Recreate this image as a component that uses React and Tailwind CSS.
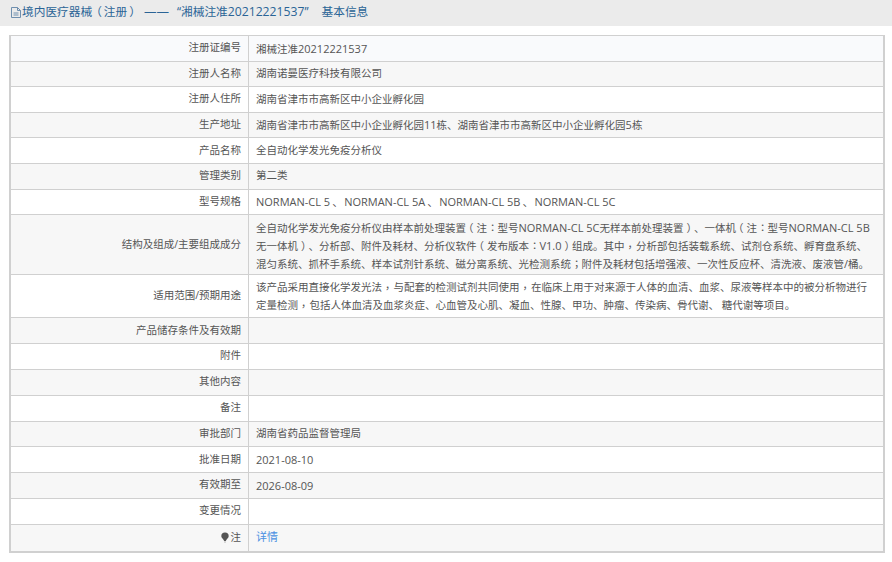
const rows = [
  ["注册证编号", "湘械注准20212221537", "h-[25.6px]", "bg-[#f9fafc]"],
  ["注册人名称", "湖南诺曼医疗科技有限公司", "h-[25.6px]", "bg-[#f7f7f7]"],
  ["注册人住所", "湖南省津市市高新区中小企业孵化园", "h-[25.6px]", "bg-white"],
  ["生产地址", "湖南省津市市高新区中小企业孵化园11栋、湖南省津市市高新区中小企业孵化园5栋", "h-[25.6px]", "bg-[#f7f7f7]"],
  ["产品名称", "全自动化学发光免疫分析仪", "h-[25.6px]", "bg-white"],
  ["管理类别", "第二类", "h-[25.6px]", "bg-[#f7f7f7]"],
  ["型号规格", "NORMAN", "h-[25.6px]", "bg-white"],
  ["结构及组成/主要组成成分", "全自动化学发光免疫分析仪由样本前处理装置（注：型号NORMAN-CL 5C无样本前处理装置）、一体机（注：型号NORMAN-CL 5B无一体机）、分析部、附件及耗材、分析仪软件（发布版本：V1.0）组成。其中，分析部包括装载系统、试剂仓系统、孵育盘系统、混匀系统、抓杯手系统、样本试剂针系统、磁分离系统、光检测系统；附件及耗材包括增强液、一次性反应杯、清洗液、废液管/桶。", "h-[60px]", "bg-[#f7f7f7]"],
  ["适用范围/预期用途", "该产品采用直接化学发光法，与配套的检测试剂共同使用，在临床上用于对来源于人体的血清、血浆、尿液等样本中的被分析物进行定量检测，包括人体血清及血浆炎症、心血管及心肌、凝血、性腺、甲功、肿瘤、传染病、骨代谢、 糖代谢等项目。", "h-[43.2px]", "bg-white"],
  ["产品储存条件及有效期", "", "h-[25.8px]", "bg-[#f7f7f7]"],
  ["附件", "", "h-[25.8px]", "bg-white"],
  ["其他内容", "", "h-[25.8px]", "bg-[#f7f7f7]"],
  ["备注", "", "h-[25.8px]", "bg-white"],
  ["审批部门", "湖南省药品监督管理局", "h-[25.8px]", "bg-[#f7f7f7]"],
  ["批准日期", "2021-08-10", "h-[25.8px]", "bg-white"],
  ["有效期至", "2026-08-09", "h-[25.8px]", "bg-[#f7f7f7]"],
  ["变更情况", "", "h-[25.8px]", "bg-white"],
];

function Mixed({ text }) {
  const parts = text.split(/([A-Za-z0-9.\-\/ ]+|[（），：；])/).filter(Boolean);
  return parts.map((p, i) => {
    if (p === "（") return <span key={i} className="inline-block -translate-x-[3px]">{p}</span>;
    if (p === "）") return <span key={i} className="inline-block translate-x-[3px]">{p}</span>;
    if (p === "，") return <span key={i} className="mr-[1px] inline-block translate-x-[3px] -translate-y-[2px]">{p}</span>;
    if ("：；".includes(p)) return <span key={i} className="inline-block translate-x-[3px] -translate-y-[1px]">{p}</span>;
    if (/^[A-Za-z0-9.\-\/ ]+$/.test(p)) return <span key={i} className="text-[11px]">{p}</span>;
    return <span key={i}>{p}</span>;
  });
}

function Norman() {
  return (
    <span className="text-[11px]">
      NORMAN-CL 5<span className="ml-[2px] mr-[1px]">、</span>NORMAN-CL 5A<span className="ml-[2px] mr-[1px]">、</span>NORMAN-CL 5B<span className="ml-[2px] mr-[1px]">、</span>NORMAN-CL 5C
    </span>
  );
}

function Row({ label, height, bg, children, last }) {
  return (
    <div className={`flex ${height} ${bg} ${last ? "" : "border-b border-[#d0d0d0]"}`}>
      <div className="flex w-[238px] shrink-0 items-center justify-end border-r border-[#d0d0d0] pb-[1px] pr-[7px]">{label}</div>
      <div className="flex-1 pl-[7px] pr-[10px] pt-[3.5px]">{children}</div>
    </div>
  );
}

export default function App() {
  return (
    <div className="min-h-[562px] bg-white font-['Open_Sans','Noto_Sans_CJK_SC',sans-serif] text-[10.5px] leading-[17.3px] text-[#555]">
      <div className="flex h-[26px] items-center bg-[#ebebeb] pb-[2px] pl-[10px] text-[11.7px] text-[#2a6496]">
        <svg width="12" height="13" viewBox="0 0 12 13" fill="none" stroke="#6f8fae" strokeWidth="1" className="shrink-0">
          <path d="M1.5 1.5h6l3 3v7h-9z" />
          <path d="M7.5 1.5v3h3M3.5 7h5M3.5 9h5" />
        </svg>
        <span className="whitespace-pre">
          境内医疗器械<span className="inline-block -translate-x-[2px]">（</span>注册<span className="inline-block translate-x-[2px]">）</span><span className="ml-[5px] mr-[8px] inline-block w-[25px] whitespace-nowrap text-[12.5px]">——</span>“湘械注准<span className="text-[12.2px]">20212221537</span>”<span className="ml-[13px]">基本信息</span>
        </span>
      </div>
      <div className="ml-[9px] mt-[9px] w-[876px] border-x-2 border-b-2 border-t border-[#d0d0d0]">
        {rows.map(([k, v, h, bg]) => (
          <Row key={k} label={k} height={h} bg={bg}>
            {v === "NORMAN" ? <Norman /> : <Mixed text={v} />}
          </Row>
        ))}
        <Row last height="h-[26px]" bg="bg-[#f7f7f7]" label={
          <span className="inline-flex items-center">
            <svg width="8" height="11" viewBox="0 0 8 11" className="mr-[1.5px] shrink-0">
              <path d="M4 .5a3.7 3.7 0 0 1 3.7 3.7C7.7 6 5.4 7 4.8 9H3.2C2.6 7 .3 6 .3 4.2A3.7 3.7 0 0 1 4 .5z" fill="#555" />
              <path d="M3.2 9.5h1.6v1H3.2z" fill="#aaa" />
            </svg>
            注
          </span>
        }>
          <span className="text-[11px] text-[#4a90e2]">详情</span>
        </Row>
      </div>
    </div>
  );
}
